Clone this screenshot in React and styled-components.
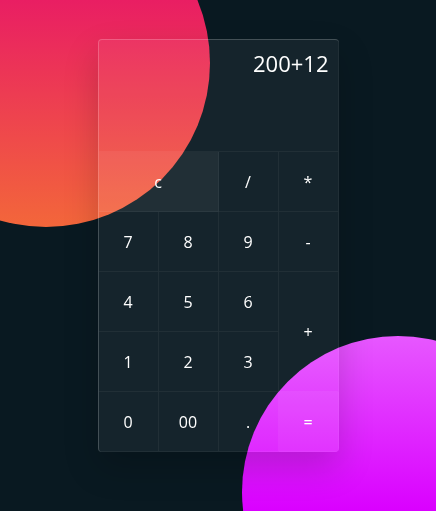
import React from "react";
import styled, { createGlobalStyle } from "styled-components";

const Global = createGlobalStyle`
  * { box-sizing: border-box; margin: 0; padding: 0; }
  html, body { height: 100%; }
  body {
    margin: 0;
    background: #091921;
    overflow: hidden;
    font-family: "Open Sans", "Noto Sans", sans-serif;
  }
`;

const Page = styled.main`
  position: relative;
  min-height: 100vh;
  display: flex;
  justify-content: center;
  align-items: flex-start;
  padding-top: 39px;
`;

const Orb = styled.div`
  position: fixed;
  inset: 0;
  background: ${(p) => p.$bg};
  clip-path: circle(${(p) => p.$r}px at ${(p) => p.$x}px ${(p) => p.$y}px);
  z-index: 0;
`;

const Calculator = styled.div`
  position: relative;
  z-index: 1;
  display: grid;
  grid-template-columns: repeat(4, 60px);
  grid-template-rows: 112px repeat(5, 60px);
  background: rgba(255, 255, 255, 0.05);
  border-top: 1px solid rgba(255, 255, 255, 0.2);
  border-left: 1px solid rgba(255, 255, 255, 0.2);
  border-radius: 4px;
  box-shadow: 0 15px 35px rgba(0, 0, 0, 0.18);
  overflow: hidden;
`;

const Display = styled.div`
  grid-column: span 4;
  padding: 8px 9px 0 10px;
  text-align: right;
  color: #fff;
  font-size: 22px;
  border-right: 1px solid rgba(255, 255, 255, 0.05);
  border-bottom: 1px solid rgba(255, 255, 255, 0.05);
`;

const Key = styled.span`
  display: grid;
  place-items: center;
  color: #fff;
  font-size: 16px;
  user-select: none;
  border-right: 1px solid rgba(255, 255, 255, 0.05);
  border-bottom: 1px solid rgba(255, 255, 255, 0.05);
  grid-column: span ${(p) => p.$cols || 1};
  grid-row: span ${(p) => p.$rows || 1};
  background: ${(p) => (p.$lit ? "rgba(255, 255, 255, 0.05)" : "transparent")};
`;

const keys = [
  { k: "c", cols: 2, lit: true },
  { k: "/" },
  { k: "*" },
  { k: "7" },
  { k: "8" },
  { k: "9" },
  { k: "-" },
  { k: "4" },
  { k: "5" },
  { k: "6" },
  { k: "+", rows: 2 },
  { k: "1" },
  { k: "2" },
  { k: "3" },
  { k: "0" },
  { k: "00" },
  { k: "." },
  { k: "=", lit: true },
];

export default function App() {
  return (
    <>
      <Global />
      <Page>
        <Orb
          $bg="linear-gradient(#e91e63, #ffc107)"
          $r={164}
          $x={46}
          $y={63}
        />
        <Orb
          $bg="linear-gradient(#ffffff, #da00ff)"
          $r={156}
          $x={398}
          $y={492}
        />
        <Calculator>
          <Display>200+12</Display>
          {keys.map((b) => (
            <Key key={b.k} $cols={b.cols} $rows={b.rows} $lit={b.lit}>
              {b.k}
            </Key>
          ))}
        </Calculator>
      </Page>
    </>
  );
}
